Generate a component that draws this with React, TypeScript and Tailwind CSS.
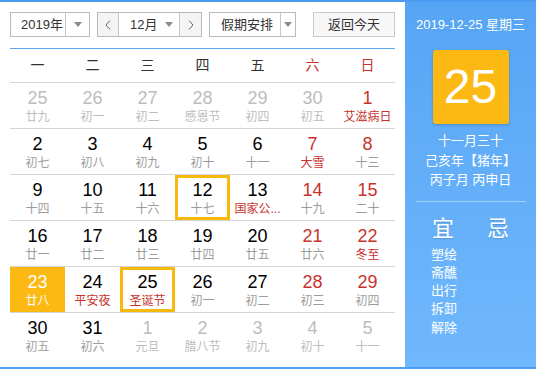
import React from "react";

type Day = { n: number; l: string; other?: boolean; red?: boolean; fest?: boolean; sel?: boolean; box?: boolean };

const rows: Day[][] = [
  [
    { n: 25, l: "廿九", other: true }, { n: 26, l: "初一", other: true }, { n: 27, l: "初二", other: true },
    { n: 28, l: "感恩节", other: true }, { n: 29, l: "初四", other: true }, { n: 30, l: "初五", other: true },
    { n: 1, l: "艾滋病日", red: true, fest: true },
  ],
  [
    { n: 2, l: "初七" }, { n: 3, l: "初八" }, { n: 4, l: "初九" }, { n: 5, l: "初十" }, { n: 6, l: "十一" },
    { n: 7, l: "大雪", red: true, fest: true }, { n: 8, l: "十三", red: true },
  ],
  [
    { n: 9, l: "十四" }, { n: 10, l: "十五" }, { n: 11, l: "十六" }, { n: 12, l: "十七", box: true },
    { n: 13, l: "国家公...", fest: true }, { n: 14, l: "十九", red: true }, { n: 15, l: "二十", red: true },
  ],
  [
    { n: 16, l: "廿一" }, { n: 17, l: "廿二" }, { n: 18, l: "廿三" }, { n: 19, l: "廿四" }, { n: 20, l: "廿五" },
    { n: 21, l: "廿六", red: true }, { n: 22, l: "冬至", red: true, fest: true },
  ],
  [
    { n: 23, l: "廿八", sel: true }, { n: 24, l: "平安夜", fest: true }, { n: 25, l: "圣诞节", fest: true, box: true },
    { n: 26, l: "初一" }, { n: 27, l: "初二" }, { n: 28, l: "初三", red: true }, { n: 29, l: "初四", red: true },
  ],
  [
    { n: 30, l: "初五" }, { n: 31, l: "初六" }, { n: 1, l: "元旦", other: true }, { n: 2, l: "腊八节", other: true },
    { n: 3, l: "初九", other: true }, { n: 4, l: "初十", other: true }, { n: 5, l: "十一", other: true },
  ],
];

const weekdays = ["一", "二", "三", "四", "五", "六", "日"];
const yi = ["塑绘", "斋醮", "出行", "拆卸", "解除"];

function Caret() {
  return (
    <svg width="8" height="5" viewBox="0 0 8 5">
      <path d="M0 0h8L4 5z" fill="#8a8a8a" />
    </svg>
  );
}

function Chevron({ dir }: { dir: "l" | "r" }) {
  return (
    <svg width="6" height="10" viewBox="0 0 6 10">
      <path d={dir === "l" ? "M5 0.5L1 5l4 4.5" : "M1 0.5L5 5l-4 4.5"} stroke="#666" strokeWidth="1" fill="none" />
    </svg>
  );
}

function Cell({ d }: { d: Day }) {
  let num = "text-black";
  let lun = "text-[#9c9c9c]";
  if (d.other) {
    num = "text-[#bdbdbd]";
    lun = "text-[#bdbdbd]";
  } else if (d.red) num = "text-[#c9322c]";
  if (d.fest && !d.other) lun = "text-[#c9322c]";
  if (d.sel) {
    num = "text-white";
    lun = "text-white";
  }
  return (
    <div
      className={`h-[45px] flex flex-col items-center pt-[3px] border-[3px] ${
        d.box ? "border-[#f7b90b]" : "border-transparent"
      } ${d.sel ? "bg-[#fdb913]" : ""}`}
    >
      <div className={`text-[18px] leading-[22px] -mt-[2px] ${num}`}>{d.n}</div>
      <div className={`text-[12px] leading-[16px] whitespace-nowrap ${lun}`}>{d.l}</div>
    </div>
  );
}

export default function App() {
  return (
    <div className="w-[536px] h-[369px] flex border-t-2 border-b-2 border-[#4b9cf0] font-['Liberation_Sans','Noto_Sans_CJK_SC',sans-serif] overflow-hidden">
      <div className="w-[405px] bg-white pl-[10px] pr-[10px] flex flex-col">
        <div className="mt-[10px] h-[25px] flex text-[13px] text-[#333]">
          <div className="w-[80px] flex border border-[#b9b9b9]">
            <div className="w-[54px] pl-[10px] flex items-center">2019年</div>
            <div className="flex-1 border-l border-[#c8c8c8] flex items-center justify-center"><Caret /></div>
          </div>
          <div className="ml-[7px] w-[105px] flex border border-[#b9b9b9]">
            <div className="w-[21px] bg-[#f4f4f4] border-r border-[#c8c8c8] flex items-center justify-center"><Chevron dir="l" /></div>
            <div className="flex-1 flex items-center pl-[11px] gap-[8px]">12月<Caret /></div>
            <div className="w-[22px] bg-[#f4f4f4] border-l border-[#c8c8c8] flex items-center justify-center"><Chevron dir="r" /></div>
          </div>
          <div className="ml-[7px] w-[87px] flex border border-[#b9b9b9]">
            <div className="w-[70px] pl-[11px] flex items-center whitespace-nowrap">假期安排</div>
            <div className="flex-1 border-l border-[#c8c8c8] flex items-center justify-center"><Caret /></div>
          </div>
          <div className="ml-auto w-[82px] border border-[#c9c9c9] bg-[#f7f7f7] flex items-center justify-center">返回今天</div>
        </div>
        <div className="mt-[11px] border-t border-[#5ea8f0] h-[34px] grid grid-cols-7 text-[14px]">
          {weekdays.map((w, i) => (
            <div key={w} className={`flex items-center justify-center ${i >= 5 ? "text-[#c9322c]" : "text-[#333]"}`}>{w}</div>
          ))}
        </div>
        {rows.map((r, i) => (
          <div key={i} className="border-t border-[#d5d5d5] grid grid-cols-7">
            {r.map((d, j) => <Cell key={j} d={d} />)}
          </div>
        ))}
      </div>
      <div className="flex-1 bg-gradient-to-b from-[#56a5f4] to-[#70b8fd] text-white flex flex-col items-center">
        <div className="mt-[13px] text-[13px] leading-[20px] whitespace-nowrap">2019-12-25 星期三</div>
        <div className="mt-[15px] w-[76px] h-[74px] rounded-[3px] bg-[#fdb913] shadow-[0_1px_3px_rgba(0,0,0,0.2)] flex items-center justify-center text-[48px] leading-none">25</div>
        <div className="mt-[7px] text-[13px] leading-[19.5px] flex flex-col items-center whitespace-nowrap">
          <div>十一月三十</div>
          <div>己亥年【猪年】</div>
          <div>丙子月 丙申日</div>
        </div>
        <div className="mt-[11px] h-px w-[110px] bg-[#a3cffb]" />
        <div className="self-stretch pl-[27px] mt-[14px] flex gap-[33px] text-[22px] leading-[26px] [text-shadow:0_1px_1px_rgba(0,0,0,0.15)]">
          <span>宜</span>
          <span>忌</span>
        </div>
        <div className="self-stretch pl-[26px] mt-[4px] text-[13px] leading-[18.3px]">
          {yi.map((t) => <div key={t}>{t}</div>)}
        </div>
      </div>
    </div>
  );
}
